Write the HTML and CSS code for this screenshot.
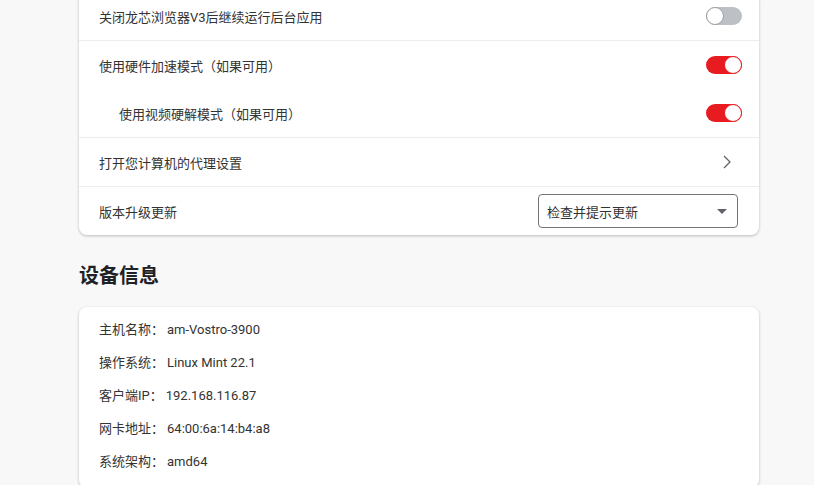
FILE: index.html
```html
<!DOCTYPE html>
<html>
  <head>
    <title>设置</title>
    <link rel="stylesheet" href="styles.css">
  </head>
  <body>
    <div class="page">
      <div class="card card-top">
        <div class="row">
          <span>关闭龙芯浏览器V3后继续运行后台应用</span>
          <span class="toggle"></span>
        </div>
        <div class="group">
          <div class="row">
            <span>使用硬件加速模式（如果可用）</span>
            <span class="toggle on"></span>
          </div>
          <div class="row sub">
            <span>使用视频硬解模式（如果可用）</span>
            <span class="toggle on"></span>
          </div>
        </div>
        <div class="row">
          <span>打开您计算机的代理设置</span>
          <svg class="chevron" width="10" height="14" viewBox="0 0 10 14">
            <path d="M2 1 L8 7 L2 13" fill="none" stroke="#5f6368" stroke-width="1.3"/>
          </svg>
        </div>
        <div class="row">
          <span>版本升级更新</span>
          <div class="select">
            <span>检查并提示更新</span>
            <span class="arrow"></span>
          </div>
        </div>
      </div>

      <h2 class="section-title">设备信息</h2>

      <div class="card info">
        <div class="info-row">主机名称：<span>am-Vostro-3900</span></div>
        <div class="info-row">操作系统：<span>Linux Mint 22.1</span></div>
        <div class="info-row">客户端IP：<span>192.168.116.87</span></div>
        <div class="info-row">网卡地址：<span>64:00:6a:14:b4:a8</span></div>
        <div class="info-row">系统架构：<span>amd64</span></div>
      </div>
    </div>
  </body>
</html>
```

FILE: styles.css
```css
body {
  margin: 0;
  background-color: #f8f8f8;
  font-family: Roboto, "Noto Sans CJK SC", sans-serif;
  font-size: 13px;
  color: #333;
  overflow: hidden;
}

.page {
  width: 680px;
  margin-left: 79px;
}

.card {
  background-color: #fff;
  border-radius: 8px;
  box-shadow: 0 1px 3px rgba(0, 0, 0, 0.25);
}

.card-top {
  margin-top: -8px;
}

.row {
  display: flex;
  align-items: center;
  justify-content: space-between;
  height: 48px;
  padding: 0 17px 0 20px;
  border-top: 1px solid #ececec;
}

.card-top > .row:first-child,
.group .row {
  border-top: none;
}

.group {
  border-top: 1px solid #ececec;
}

.row.sub {
  padding-left: 40px;
}

.toggle {
  position: relative;
  width: 36px;
  height: 18px;
  border-radius: 9px;
  background-color: #bdc1c6;
}

.toggle::after {
  content: "";
  position: absolute;
  left: 0;
  top: 0;
  width: 16px;
  height: 16px;
  border-radius: 50%;
  background-color: #fff;
  border: 1px solid #9aa0a6;
}

.toggle.on {
  background-color: #e81c20;
}

.toggle.on::after {
  left: 18px;
  border-color: #e81c20;
}

.chevron {
  margin-right: 10px;
}

.select {
  display: flex;
  align-items: center;
  justify-content: space-between;
  box-sizing: border-box;
  width: 200px;
  height: 34px;
  padding: 0 10px 0 8px;
  margin-right: 4px;
  border: 1px solid #757575;
  border-radius: 4px;
}

.arrow {
  width: 0;
  height: 0;
  border-left: 5px solid transparent;
  border-right: 5px solid transparent;
  border-top: 5px solid #5f6368;
}

.section-title {
  margin: 25px 0 15px;
  font-size: 20px;
  font-weight: bold;
  color: #202124;
  line-height: 32px;
}

.info {
  padding: 6px 20px 10px;
}

.info-row {
  height: 33px;
  line-height: 33px;
}

.info-row span {
  margin-left: 3px;
}
```
